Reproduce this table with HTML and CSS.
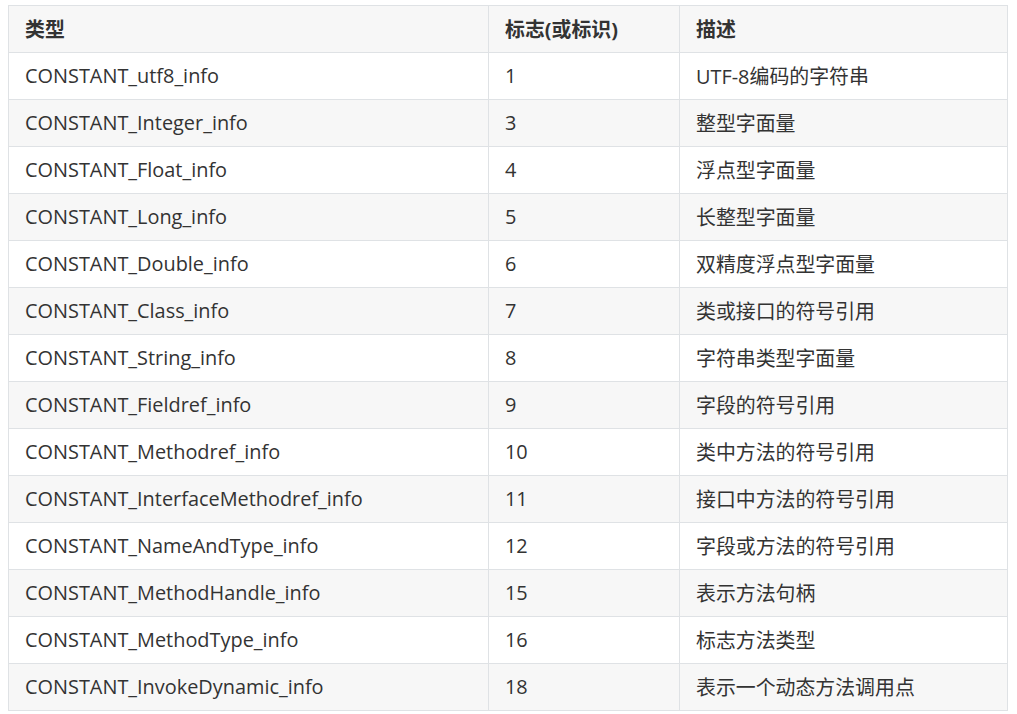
FILE: index.html
```html
<!DOCTYPE html>
<html lang="zh-CN">
<head>
<meta charset="utf-8">
<title>常量池项目类型</title>
<link rel="stylesheet" href="styles.css">
</head>
<body>
<div class="page">
<table class="const-table">
  <thead>
    <tr><th class="c1">类型</th><th class="c2">标志(或标识)</th><th class="c3">描述</th></tr>
  </thead>
  <tbody>
    <tr><td>CONSTANT_utf8_info</td><td>1</td><td>UTF-8编码的字符串</td></tr>
    <tr><td>CONSTANT_Integer_info</td><td>3</td><td>整型字面量</td></tr>
    <tr><td>CONSTANT_Float_info</td><td>4</td><td>浮点型字面量</td></tr>
    <tr><td>CONSTANT_Long_info</td><td>5</td><td>长整型字面量</td></tr>
    <tr><td>CONSTANT_Double_info</td><td>6</td><td>双精度浮点型字面量</td></tr>
    <tr><td>CONSTANT_Class_info</td><td>7</td><td>类或接口的符号引用</td></tr>
    <tr><td>CONSTANT_String_info</td><td>8</td><td>字符串类型字面量</td></tr>
    <tr><td>CONSTANT_Fieldref_info</td><td>9</td><td>字段的符号引用</td></tr>
    <tr><td>CONSTANT_Methodref_info</td><td>10</td><td>类中方法的符号引用</td></tr>
    <tr><td>CONSTANT_InterfaceMethodref_info</td><td>11</td><td>接口中方法的符号引用</td></tr>
    <tr><td>CONSTANT_NameAndType_info</td><td>12</td><td>字段或方法的符号引用</td></tr>
    <tr><td>CONSTANT_MethodHandle_info</td><td>15</td><td>表示方法句柄</td></tr>
    <tr><td>CONSTANT_MethodType_info</td><td>16</td><td>标志方法类型</td></tr>
    <tr><td>CONSTANT_InvokeDynamic_info</td><td>18</td><td>表示一个动态方法调用点</td></tr>
  </tbody>
</table>
</div>
</body>
</html>
```
FILE: styles.css
```css
html, body {
  margin: 0;
  padding: 0;
  background: #ffffff;
}
.page {
  padding: 5px 0 0 8px;
}
.const-table {
  border-collapse: collapse;
  width: 999px;
  table-layout: fixed;
  font-family: "Open Sans", "Noto Sans CJK SC", sans-serif;
  font-size: 19.9px;
  color: #333333;
}
.const-table th,
.const-table td {
  border: 1px solid #dfe2e5;
  height: 47px;
  padding: 0 16px 2px 16px;
  text-align: left;
  vertical-align: middle;
  box-sizing: border-box;
  white-space: nowrap;
}
.const-table th {
  font-weight: 700;
  background: #f7f7f7;
}
.const-table .c1 { width: 480px; }
.const-table .c2 { width: 191px; }
.const-table .c3 { width: 328px; }
.const-table tbody tr:nth-child(even) {
  background: #f7f7f7;
}
```
